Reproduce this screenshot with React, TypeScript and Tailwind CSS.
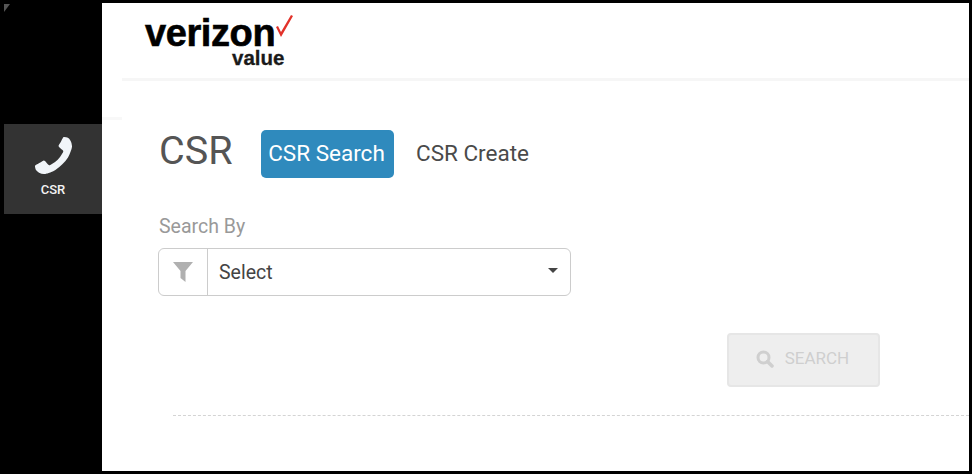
function PhoneIcon() {
  return (
    <svg viewBox="0 0 1408 1408" className="h-[37px] w-[37px] -scale-x-100 fill-[#f1f5f9]">
      <path d="M1408 1112q0 27-10 70.500t-21 68.500q-21 50-122 106-94 51-186 51-27 0-53-3.500t-57.500-12.500-47-14.500-55.500-20.500-49-18q-98-35-175-83-127-79-264-216t-216-264q-48-77-83-175-3-9-18-49t-20.500-55.500-14.500-47-12.500-57.500-3.500-53q0-92 51-186 56-101 106-122 25-11 68.500-21t70.500-10q14 0 21 3 18 6 53 76 11 19 30 54t35 63.500 31 53.500q3 4 17.500 25t21.500 35.500 7 28.500q0 20-28.500 50t-62 55-62 53-28.500 46q0 9 5 22.500t8.500 20.500 14 24 11.500 19q76 137 174 235t235 174q2 1 19 11.500t24 14 20.500 8.500 22.500 5q18 0 46-28.500t53-62 55-62 50-28.500q14 0 28.500 7t35.500 21.500 25 17.500q25 15 53.500 31t63.500 35 54 30q70 35 76 53 3 7 3 21z" />
    </svg>
  )
}

function SearchIcon() {
  return (
    <svg viewBox="0 0 18 18" className="h-[18px] w-[18px]">
      <circle cx="7.500" cy="7.500" r="5.500" fill="none" stroke="#cfcfcf" strokeWidth="3" />
      <path d="M11.500 11.500 L16 16" stroke="#cfcfcf" strokeWidth="3.500" strokeLinecap="round" />
    </svg>
  )
}

export default function App() {
  return (
    <div className="h-[475px] w-[972px] bg-white pb-[1px] font-['Roboto',sans-serif]">
      <div className="flex h-[474px] w-[972px] border-y-[3px] border-r-[3px] border-l-[4px] border-black">
        {/* Sidebar */}
        <aside className="relative flex w-[98px] shrink-0 flex-col bg-black pt-[121px]">
          <div className="absolute top-[1px] left-0 h-0 w-0 border-t-[8px] border-r-[6px] border-t-[#555555] border-r-transparent" />
          <div className="flex h-[90px] flex-col items-center bg-[#333333] pt-[13px]">
            <PhoneIcon />
            <span className="mt-[9px] text-[13px] leading-[14px] font-medium text-[#f4f4f4]">CSR</span>
          </div>
        </aside>

        <main className="relative min-w-0 flex-1">
          <div className="absolute top-[114px] left-0 h-[3px] w-[20px] bg-[#f8f8f8]" />

          {/* Header */}
          <header className="ml-[20px] h-[78px] border-b-[3px] border-[#f6f6f6] pl-[23px]">
            <div className="relative h-[75px] w-[160px] font-['Liberation_Sans',sans-serif] font-bold text-black">
              <span className="absolute top-[14px] left-0 text-[38px] leading-[32px] tracking-[-0.4px] [-webkit-text-stroke:0.6px_black]">verizon</span>
              <span className="absolute top-[46px] left-[87px] text-[20.500px] leading-[18px] text-[#1a1a1a] [-webkit-text-stroke:0.3px_#1a1a1a]">value</span>
              <svg viewBox="0 0 17 22" className="absolute top-[12px] left-[131px] h-[22px] w-[17px]">
                <path d="M0 12 L2 11 L5 17 L15 0 L17 1 L5 22 Z" fill="#e2322a" />
              </svg>
            </div>
          </header>

          {/* Content */}
          <div className="pt-[49px] pl-[57px]">
            <div className="flex items-start">
              <h1 className="w-[102px] text-[39.500px] leading-[42px] font-normal text-[#555555]">CSR</h1>
              <button className="h-[48px] w-[133px] rounded-[5px] bg-[#2f8abd] pr-[2px] text-[22.500px] text-white">CSR Search</button>
              <button className="mt-[9px] ml-[22px] text-[22.500px] leading-[28px] text-[#4a4a4a]">CSR Create</button>
            </div>

            <label className="mt-[37px] block text-[19.500px] leading-[24px] text-[#999999]">Search By</label>

            <div className="mt-[9px] -ml-[1px] flex h-[48px] w-[413px] items-center rounded-[6px] border border-[#cccccc]">
              <div className="flex h-full w-[49px] items-center justify-center border-r border-[#cccccc]">
                <svg viewBox="0 0 20 20" className="h-[20px] w-[20px] fill-[#b0b0b0]">
                  <path d="M0 0 H20 L12.500 9 V20 L7.500 16 V9 Z" />
                </svg>
              </div>
              <span className="flex-1 pt-[1px] pl-[11px] text-[19.500px] text-[#444444]">Select</span>
              <span className="mr-[12px] mb-[3px] h-0 w-0 border-x-[5px] border-t-[5px] border-x-transparent border-t-[#444444]" />
            </div>

            <div className="mt-[37px] flex h-[54px] w-[721px] justify-end">
              <button className="flex h-[54px] w-[153px] items-center justify-center gap-[11px] rounded-[4px] border-2 border-[#e6e6e6] bg-[#eeeeee] pr-[2px] pb-[2px] text-[17px] text-[#cfcfcf]">
                <SearchIcon />
                SEARCH
              </button>
            </div>

            <div className="mt-[28px] ml-[14px] border-t border-dashed border-[#d4d4d4]" />
          </div>
        </main>
      </div>
    </div>
  )
}
